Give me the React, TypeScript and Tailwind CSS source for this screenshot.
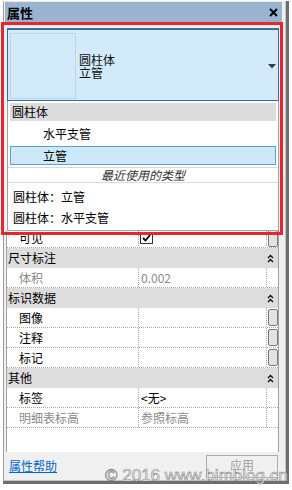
import * as React from 'react';

type Row =
  | { kind: 'group'; label: string }
  | { kind: 'row'; label: string; value?: string; dim?: boolean; btn?: boolean };

const ROWS: Row[] = [
  { kind: 'group', label: '尺寸标注' },
  { kind: 'row', label: '体积', value: '0.002', dim: true },
  { kind: 'group', label: '标识数据' },
  { kind: 'row', label: '图像', btn: true },
  { kind: 'row', label: '注释', btn: true },
  { kind: 'row', label: '标记', btn: true },
  { kind: 'group', label: '其他' },
  { kind: 'row', label: '标签', value: '<无>' },
  { kind: 'row', label: '明细表标高', value: '参照标高', dim: true },
];

function Chevrons() {
  return (
    <svg width="7" height="9" viewBox="0 0 7 9" className="block">
      <path d="M1 4 L3.5 1.5 L6 4" fill="none" stroke="#111" strokeWidth="1.4" />
      <path d="M1 8 L3.5 5.5 L6 8" fill="none" stroke="#111" strokeWidth="1.4" />
    </svg>
  );
}

function EditBtn() {
  return <div className="mx-auto w-[10px] h-[17px] bg-[#e2e2e2] border border-[#7a7a7a] rounded-[2px]" />;
}

export default function App() {
  return (
    <div className="relative w-[292px] h-[490px] bg-white pt-[1px] pl-[3px] font-['Noto_Sans_CJK_SC',sans-serif] text-[12px] text-black">
      {/* window frame */}
      <div className="w-[286px] border-r-[3px] border-b-[3px] border-[#6e6e6e]">
        <div className="flex flex-col bg-[#f0f0f0] border-l border-t border-r border-b border-l-[#9c9c9c] border-t-[#e8e8e8] border-r-[#c4c4c4] border-b-[#c4c4c4]">
          {/* title bar */}
          <div className="ml-[1px] w-[277px] h-[20px] bg-[#99b4d1] flex items-center justify-between pl-[2px] pr-[4px]">
            <span className="font-bold text-[13px] leading-none">属性</span>
            <svg width="9" height="9" viewBox="0 0 9 9">
              <path d="M1 1 L8 8 M8 1 L1 8" stroke="#000" strokeWidth="2" />
            </svg>
          </div>

          {/* type selector */}
          <div className="mt-[6px] ml-[3px] w-[272px] h-[73px] bg-[#d2eaf9] border border-t-2 border-[#2d6ea7] border-t-[#3d6f95] flex items-center pl-[2px] pt-[1px]">
            <div className="w-[66px] h-[66px] border border-[#bfd3e0] bg-[#d2eaf9]" />
            <div className="ml-[3px] leading-[13px] text-[#111]">
              <div>圆柱体</div>
              <div>立管</div>
            </div>
            <svg width="8" height="5" viewBox="0 0 8 5" className="ml-auto mr-[2px] mt-[2px]">
              <path d="M0 0 L8 0 L4 4.5 Z" fill="#3c3c3c" />
            </svg>
          </div>

          {/* dropdown list */}
          <div className="ml-[3px] w-[272px] h-[130px] bg-white border-x border-b border-[#a3a3a3] pt-[2px] flex flex-col">
            <div className="mx-[2px] h-[18px] bg-[#dcdcdc] pl-[2px] leading-[18px]">圆柱体</div>
            <div className="h-[25px] pl-[35px] leading-[25px]">水平支管</div>
            <div className="mx-[2px] h-[19px] bg-[#cde8f9] border border-[#5a9fd6] pl-[32px] leading-[17px]">立管</div>
            <div className="mt-[2px] h-[16px] border-y border-[#dadada] text-center italic text-[#333] leading-[14px]">最近使用的类型</div>
            <div className="mt-[3px] h-[21px] pl-[5px] leading-[21px]">圆柱体：立管</div>
            <div className="h-[21px] pl-[5px] leading-[21px]">圆柱体：水平支管</div>
          </div>

          {/* property grid */}
          <div className="ml-[2px] w-[273px] h-[221px] bg-white border-x border-[#a0a0a0] flex flex-col">
            <div className="h-[17px] overflow-hidden border-b border-dotted border-[#a8a8a8]">
              <div className="-mt-[3px] h-[20px] flex">
                <div className="w-[132px] pl-[12px] leading-[20px] border-r border-dotted border-[#a8a8a8]">可见</div>
                <div className="w-[128px] border-r border-dotted border-[#a8a8a8] pl-[1px] flex items-center">
                  <div className="w-[13px] h-[12px] border border-[#333] flex items-center justify-center">
                    <svg width="9" height="8" viewBox="0 0 9 8">
                      <path d="M1 4 L3.5 6.5 L8 1" fill="none" stroke="#000" strokeWidth="1.8" />
                    </svg>
                  </div>
                </div>
                <div className="flex-1 pt-[2px]">
                  <EditBtn />
                </div>
              </div>
            </div>
            {ROWS.map((r, i) =>
              r.kind === 'group' ? (
                <div key={i} className="h-[20px] bg-[#dddddd] flex items-center justify-between pl-[1px] pr-[4px]">
                  <span className="leading-[20px]">{r.label}</span>
                  <Chevrons />
                </div>
              ) : (
                <div key={i} className="h-[20px] flex border-b border-dotted border-[#a8a8a8]">
                  <div className={`w-[132px] pl-[12px] leading-[19px] border-r border-dotted border-[#a8a8a8] ${r.dim ? 'text-[#8a8a8a]' : 'text-black'}`}>
                    {r.label}
                  </div>
                  <div className={`w-[128px] pl-[2px] leading-[19px] border-r border-dotted border-[#a8a8a8] ${r.dim ? 'text-[#8a8a8a]' : 'text-black'}`}>
                    {r.value}
                  </div>
                  <div className="flex-1 pt-[1px]">{r.btn && <EditBtn />}</div>
                </div>
              )
            )}
          </div>

          {/* footer */}
          <div className="h-[28px] flex items-center justify-between pl-[5px] pr-[7px]">
            <a className="text-[#0066cc] underline leading-none">属性帮助</a>
            <div className="w-[72px] h-[23px] border border-[#adadad] bg-[#f0f0f0] flex items-start justify-center pt-[1px] leading-[16px] text-[#a0a0a0]">
              应用
            </div>
          </div>
        </div>
      </div>

      {/* red highlight annotation */}
      <div className="absolute left-[1px] top-[22px] w-[282px] h-[213px] border-[3px] border-[#e8252f] pointer-events-none" />

      {/* watermark */}
      <div className="absolute left-[105px] top-[467px] font-['Liberation_Sans',Arial,sans-serif] text-[17px] leading-none text-[#f4f4f4] [-webkit-text-stroke:0.6px_#8a8a8a] pointer-events-none whitespace-nowrap">
        © 2016 www.bimblog.cn
      </div>
    </div>
  );
}
